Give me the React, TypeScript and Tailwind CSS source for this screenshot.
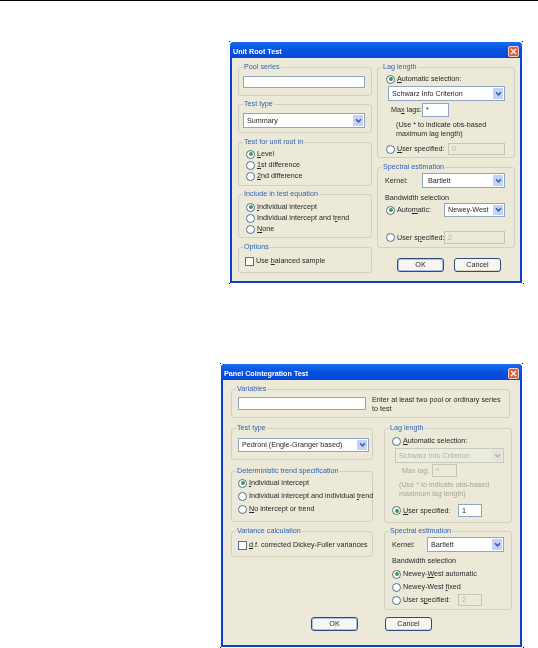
import React from "react";

function Group({ title, className, children }: { title: string; className: string; children?: React.ReactNode }) {
  return (
    <div className={`relative rounded-[3px] border border-[#d0d0bf] ${className}`}>
      <span className="absolute left-[4px] top-[-7px] whitespace-nowrap bg-[#ece9d8] px-[1px] text-[7.2px] leading-[12px] text-[#2f62b5]">{title}</span>
      {children}
    </div>
  );
}

function Radio({ on, children, className = "" }: { on?: boolean; children?: React.ReactNode; className?: string }) {
  return (
    <div className={`flex h-[12px] items-center whitespace-nowrap text-[7.2px] text-[#262626] ${className}`}>
      <span className="mr-[2px] flex h-[9px] w-[9px] shrink-0 items-center justify-center rounded-full border border-[#4f6f8f] bg-white">
        {on && <span className="h-[4px] w-[4px] rounded-full bg-[#3f9a4a]" />}
      </span>
      <span>{children}</span>
    </div>
  );
}

function Check({ children }: { children: React.ReactNode }) {
  return (
    <div className="flex h-[12px] items-center whitespace-nowrap text-[7.2px] text-[#262626]">
      <span className="mr-[2px] h-[9px] w-[9px] shrink-0 border border-[#4f6f8f] bg-white" />
      <span>{children}</span>
    </div>
  );
}

function Box({ className = "", disabled, children }: { className?: string; disabled?: boolean; children?: React.ReactNode }) {
  return (
    <div className={`flex shrink-0 items-center border pl-[3px] text-[7.2px] ${disabled ? "border-[#c4c4b4] bg-[#ece9d8] text-[#b0b0a2]" : "border-[#8fa6bd] bg-white text-[#262626]"} ${className}`}>
      {children}
    </div>
  );
}

function Select({ className = "", disabled, children }: { className?: string; disabled?: boolean; children: React.ReactNode }) {
  return (
    <div className={`flex shrink-0 items-center justify-between border pl-[3px] text-[7.2px] ${disabled ? "border-[#c9c9ba] bg-[#ebebe2] text-[#b0b0a2]" : "border-[#8fa6bd] bg-white text-[#262626]"} ${className}`}>
      <span className="whitespace-nowrap">{children}</span>
      <span className={`mr-[1px] flex h-[calc(100%-2px)] w-[10px] items-center justify-center ${disabled ? "bg-[#e4e4da]" : "bg-[#c3d3f5]"}`}>
        <svg width="7" height="6" viewBox="0 0 7 6" fill="none">
          <path d="M1 1.2 L3.5 3.8 L6 1.2" stroke={disabled ? "#b5b5a8" : "#3a5f9f"} strokeWidth="1.5" />
        </svg>
      </span>
    </div>
  );
}

function Btn({ children, def, className = "" }: { children: React.ReactNode; def?: boolean; className?: string }) {
  return (
    <div className={`flex h-[14px] w-[47px] items-center justify-center rounded-[3px] border border-[#30487a] bg-[#f7f6f0] text-[7.2px] text-[#262626] ${def ? "shadow-[inset_0_0_0_1px_#a9c0ea]" : "shadow-[inset_0_-1px_0_#d8d5c4]"} ${className}`}>
      {children}
    </div>
  );
}

function Window({ title, className, children }: { title: string; className: string; children: React.ReactNode }) {
  return (
    <div className={`relative flex flex-col rounded-t-[4px] bg-[#0a3fd0] ${className}`}>
      <span className="absolute left-[-1px] top-[-1px] h-[1px] w-[1px] bg-black" />
      <span className="absolute right-[-1px] top-[-1px] h-[1px] w-[1px] bg-black" />
      <span className="absolute bottom-[-1px] left-[-1px] h-[1px] w-[1px] bg-black" />
      <span className="absolute bottom-[-1px] right-[-2px] h-[1px] w-[1px] bg-black" />
      <div className="flex h-[16px] shrink-0 items-center justify-between rounded-t-[4px] bg-gradient-to-b from-[#1a6cf0] via-[#0651df] to-[#0a48d8] pl-[3px] pr-[3px] pt-[3px]">
        <span className="text-[7.2px] font-bold leading-none text-white">{title}</span>
        <span className="flex h-[11px] w-[11px] items-center justify-center rounded-[2px] border border-white/70 bg-[#e0603a]">
          <svg width="7" height="7" viewBox="0 0 8 8">
            <path d="M1 1 L7 7 M7 1 L1 7" stroke="#fff" strokeWidth="1.6" />
          </svg>
        </span>
      </div>
      <div className="mx-[2px] mb-[2px] flex-1 bg-[#ece9d8]">{children}</div>
    </div>
  );
}

const Note = ({ className = "", children }: { className?: string; children: React.ReactNode }) => (
  <div className={`whitespace-nowrap text-[7.2px] leading-[9px] ${className}`}>{children}</div>
);

export default function App() {
  return (
    <div className="h-[648px] w-[538px] overflow-hidden bg-white font-['Liberation_Sans',sans-serif] leading-[12px] text-[#262626] blur-[0.35px]">
      <div className="h-[1px] bg-black" />
      <Window title="Unit Root Test" className="ml-[230px] mt-[41px] h-[241px] w-[292px]">
        <div className="flex gap-[5px] pl-[6px] pt-[9px]">
          <div className="flex w-[134px] flex-col">
            <Group title="Pool series" className="h-[29px] px-[4px] pt-[8px]">
              <Box className="h-[12px] w-[122px]" />
            </Group>
            <Group title="Test type" className="mt-[8px] h-[29px] px-[4px] pt-[8px]">
              <Select className="h-[15px] w-[122px]">Summary</Select>
            </Group>
            <Group title="Test for unit root in" className="mt-[9px] h-[44px] pl-[7px] pt-[5px]">
              <Radio on><u>L</u>evel</Radio>
              <Radio className="-mt-[1px]"><u>1</u>st difference</Radio>
              <Radio className="-mt-[1px]"><u>2</u>nd difference</Radio>
            </Group>
            <Group title="Include in test equation" className="mt-[8px] h-[44px] pl-[7px] pt-[6px]">
              <Radio on><u>I</u>ndividual intercept</Radio>
              <Radio className="-mt-[1px]">Individual intercept and t<u>r</u>end</Radio>
              <Radio className="-mt-[1px]"><u>N</u>one</Radio>
            </Group>
            <Group title="Options" className="mt-[9px] h-[26px] pl-[6px] pt-[7px]">
              <Check>Use <u>b</u>alanced sample</Check>
            </Group>
          </div>
          <div className="flex w-[138px] flex-col">
            <Group title="Lag length" className="h-[91px] pl-[8px] pt-[5px]">
              <Radio on><u>A</u>utomatic selection:</Radio>
              <Select className="ml-[2px] mt-[1px] h-[15px] w-[117px]">Schwarz Info Criterion</Select>
              <div className="ml-[5px] mt-[2px] flex h-[14px] items-center text-[7.2px]">
                <span className="w-[28px] whitespace-nowrap">Ma<u>x</u> lags:</span>
                <Box className="ml-[3px] h-[14px] w-[27px]">*</Box>
              </div>
              <Note className="ml-[10px] mt-[3px]">(Use * to indicate obs-based</Note>
              <Note className="ml-[10px]">maximum lag length)</Note>
              <div className="mt-[5px] flex items-center">
                <Radio className="w-[54px]"><u>U</u>ser specified:</Radio>
                <Box disabled className="ml-[8px] h-[12px] w-[57px]">0</Box>
              </div>
            </Group>
            <Group title="Spectral estimation" className="mt-[9px] h-[81px] pl-[7px] pt-[5px]">
              <div className="flex h-[15px] items-center text-[7.2px]">
                <span className="w-[37px]">Kernel:</span>
                <Select className="h-[15px] w-[83px] pl-[5px]">Bartlett</Select>
              </div>
              <div className="mt-[4px] text-[7.2px] leading-[12px]">Bandwidth selection</div>
              <div className="mt-[-1px] flex h-[14px] items-center">
                <Radio on className="ml-[1px] w-[58px]">Auto<u>m</u>atic:</Radio>
                <Select className="h-[14px] w-[61px]">Newey-West</Select>
              </div>
              <div className="mt-[14px] flex items-center">
                <Radio className="ml-[1px] w-[58px]">User s<u>p</u>ecified:</Radio>
                <Box disabled className="h-[13px] w-[61px]">2</Box>
              </div>
            </Group>
            <div className="ml-[20px] mt-[10px] flex gap-[10px]">
              <Btn def className="w-[45px]">OK</Btn>
              <Btn>Cancel</Btn>
            </div>
          </div>
        </div>
      </Window>

      <Window title="Panel Cointegration Test" className="ml-[221px] mt-[81px] h-[283px] w-[301px]">
        <div className="pl-[8px] pt-[9px]">
          <Group title="Variables" className="flex h-[29px] w-[279px] items-center pl-[6px]">
            <Box className="h-[13px] w-[128px]" />
            <div className="ml-[6px] w-[132px] whitespace-nowrap text-[7.2px] leading-[9px]">
              Enter at least two pool or ordinary series<br />to test
            </div>
          </Group>
          <div className="mt-[10px] flex gap-[11px]">
            <div className="flex w-[142px] flex-col">
              <Group title="Test type" className="h-[32px] pl-[6px] pt-[9px]">
                <Select className="h-[14px] w-[131px]">Pedroni (Engle-Granger based)</Select>
              </Group>
              <Group title="Deterministic trend specification" className="mt-[11px] h-[51px] pl-[6px] pt-[5px]">
                <Radio on><u>I</u>ndividual intercept</Radio>
                <Radio className="mt-[1px]">Individual intercept and individual <u>t</u>rend</Radio>
                <Radio className="mt-[1px]"><u>N</u>o intercept or trend</Radio>
              </Group>
              <Group title="Variance calculation" className="mt-[9px] h-[26px] pl-[6px] pt-[7px]">
                <Check><u>d</u>.f. corrected Dickey-Fuller variances</Check>
              </Group>
            </div>
            <div className="flex w-[128px] flex-col">
              <Group title="Lag length" className="h-[95px] pl-[7px] pt-[6px]">
                <Radio><u>A</u>utomatic selection:</Radio>
                <Select disabled className="ml-[3px] mt-[1px] h-[15px] w-[109px]">Schwarz Info Criterion</Select>
                <div className="ml-[10px] mt-[1px] flex h-[13px] items-center text-[7.2px] text-[#a5a597]">
                  <span>Max lag:</span>
                  <Box disabled className="ml-[3px] h-[13px] w-[25px]">*</Box>
                </div>
                <Note className="ml-[7px] mt-[3px] text-[#a5a597]">(Use * to indicate obs-based</Note>
                <Note className="ml-[7px] text-[#a5a597]">maximum lag length)</Note>
                <div className="mt-[6px] flex h-[13px] items-center">
                  <Radio on className="w-[66px]"><u>U</u>ser specified:</Radio>
                  <Box className="h-[13px] w-[24px]">1</Box>
                </div>
              </Group>
              <Group title="Spectral estimation" className="mt-[8px] h-[79px] pl-[7px] pt-[5px]">
                <div className="flex h-[15px] items-center text-[7.2px]">
                  <span className="w-[35px]">Kernel:</span>
                  <Select className="h-[15px] w-[77px]">Bartlett</Select>
                </div>
                <div className="mt-[3px] text-[7.2px] leading-[12px]">Bandwidth selection</div>
                <Radio on className="mt-[1px]">Newey-<u>W</u>est automatic</Radio>
                <Radio className="mt-[1px]">Newey-West <u>f</u>ixed</Radio>
                <div className="mt-[1px] flex h-[12px] items-center">
                  <Radio className="w-[66px]">User s<u>p</u>ecified:</Radio>
                  <Box disabled className="h-[12px] w-[24px]">2</Box>
                </div>
              </Group>
            </div>
          </div>
          <div className="ml-[80px] mt-[7px] flex gap-[27px]">
            <Btn def>OK</Btn>
            <Btn>Cancel</Btn>
          </div>
        </div>
      </Window>
    </div>
  );
}
